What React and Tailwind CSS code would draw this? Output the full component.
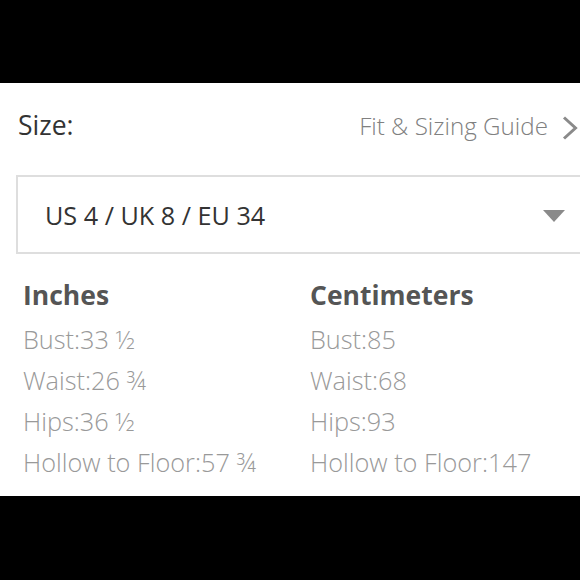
import React from 'react';

const inches = [
  ['Bust', '33 ½'],
  ['Waist', '26 ¾'],
  ['Hips', '36 ½'],
  ['Hollow to Floor', '57 ¾'],
];

const centimeters = [
  ['Bust', '85'],
  ['Waist', '68'],
  ['Hips', '93'],
  ['Hollow to Floor', '147'],
];

const Column = ({ title, rows, className }) => (
  <div className={className}>
    <div className="h-[36px] leading-[36px] text-[26.5px] font-bold text-[#555]">{title}</div>
    <div className="mt-[6px]">
      {rows.map(([label, value]) => (
        <div key={label} className="h-[41px] leading-[41px] text-[25.3px] font-light text-[#999]">
          {label}:{value}
        </div>
      ))}
    </div>
  </div>
);

const App = () => {
  return (
    <div className="w-[580px] h-[580px] bg-black flex flex-col font-['Open_Sans',_'Liberation_Sans',_sans-serif]">
      <div className="h-[83px]" />
      <div className="h-[413px] bg-white overflow-hidden">
        <div className="pt-[24px] h-[36px] box-content flex items-baseline justify-between pl-[18px] pr-[2px]">
          <span className="text-[26.5px] leading-[36px] text-[#333]">Size:</span>
          <div className="flex items-baseline gap-[14px]">
            <span className="text-[24.2px] leading-[36px] font-light text-[#808080]">Fit &amp; Sizing Guide</span>
            <svg width="16" height="24" viewBox="0 0 16 24" className="self-center mt-[3px]">
              <path d="M2 1.5 L13.5 12 L2 22.5" fill="none" stroke="#8a8a8a" strokeWidth="3" />
            </svg>
          </div>
        </div>

        <div className="mt-[32px] ml-[16px] w-[600px] h-[79px] border-2 border-[#dedede] flex items-center pl-[27px] pt-[2px]">
          <span className="text-[25.2px] text-[#333] flex-1">US 4 / UK 8 / EU 34</span>
          <svg width="22" height="12" viewBox="0 0 22 12" className="mr-[49px]">
            <path d="M0 0 H22 L11 12 Z" fill="#8a8a8a" />
          </svg>
        </div>

        <div className="mt-[23px] flex">
          <Column title="Inches" rows={inches} className="ml-[23px] w-[287px]" />
          <Column title="Centimeters" rows={centimeters} className="" />
        </div>
      </div>
      <div className="flex-1" />
    </div>
  );
};

export default App;
